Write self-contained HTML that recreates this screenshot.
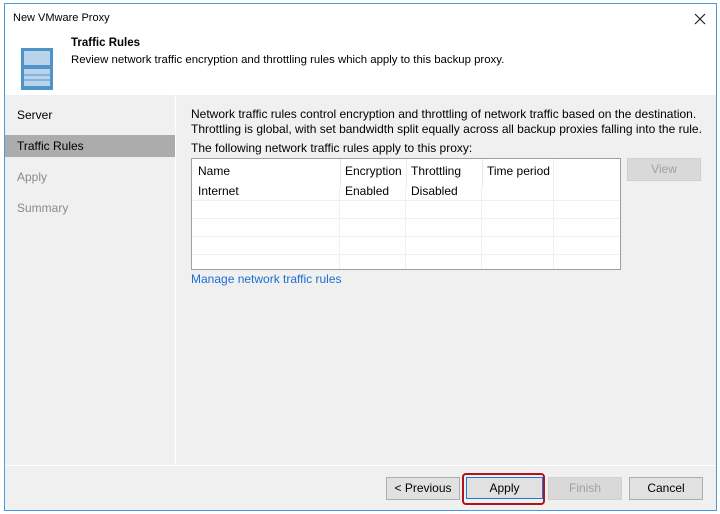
<html><head><style>
body{margin:0;width:720px;height:514px;background:#fff;font-family:"Liberation Sans",sans-serif;font-size:12px;color:#000;position:relative;overflow:hidden}
.a{position:absolute}
.win{left:4px;top:3px;width:711px;height:506px;border:1px solid #4a9ae0;background:#f0f0f0}
.btn{position:absolute;height:21px;border:1px solid #adadad;background:#e1e1e1;text-align:center;line-height:21px;font-size:12px}
.dis{color:#a0a0a0;background:#d9d9d9;border-color:#d0d0d0}
.vl{position:absolute;top:0;bottom:0;width:1px;background:#f0f0f0}
.hl{position:absolute;left:0;right:0;height:1px;background:#f0f0f0}
</style></head><body>
<div class="a win">
 <div class="a" style="left:0;top:0;width:711px;height:91px;background:#fff"></div>
 <div class="a" style="left:8px;top:8px;font-size:11px">New VMware Proxy</div>
 <svg class="a" style="left:689px;top:9px" width="12" height="12"><path d="M1 1L11 11M11 1L1 11" stroke="#222" stroke-width="1.2"/></svg>
 <svg class="a" style="left:16px;top:40px" width="34" height="46"><rect x="0" y="4" width="32" height="42" fill="#4f94c8"/><rect x="3" y="7" width="26" height="14" fill="#b9d4ea"/><rect x="3" y="25" width="26" height="17" fill="#b9d4ea"/><line x1="3" y1="31" x2="29" y2="31" stroke="#4f94c8"/><line x1="3" y1="36" x2="29" y2="36" stroke="#4f94c8"/></svg>
 <div class="a" style="left:66px;top:33px;font-weight:bold;font-size:11.5px">Traffic Rules</div>
 <div class="a" style="left:66px;top:50px;font-size:11.4px">Review network traffic encryption and throttling rules which apply to this backup proxy.</div>
 <div class="a" style="left:170px;top:91px;width:1px;height:371px;background:#fff"></div>
 <div class="a" style="left:0;top:461px;width:711px;height:1px;background:#fff"></div>
 <div class="a" style="left:12px;top:104px">Server</div>
 <div class="a" style="left:0;top:131px;width:170px;height:22px;background:#acacac"></div>
 <div class="a" style="left:12px;top:135px">Traffic Rules</div>
 <div class="a" style="left:12px;top:166px;color:#8a8a8a">Apply</div>
 <div class="a" style="left:12px;top:197px;color:#8a8a8a">Summary</div>
 <div class="a" style="left:186px;top:103px;line-height:14.5px">Network traffic rules control encryption and throttling of network traffic based on the destination.<br>Throttling is global, with set bandwidth split equally across all backup proxies falling into the rule.</div>
 <div class="a" style="left:186px;top:137px">The following network traffic rules apply to this proxy:</div>
 <div class="a" style="left:186px;top:154px;width:428px;height:110px;border:1px solid #a0a0a0;background:#fff">
  <div class="vl" style="left:147px;top:28px"></div><div class="vl" style="left:213px;top:28px"></div><div class="vl" style="left:289px;top:28px"></div><div class="vl" style="left:361px"></div>
  <div class="vl" style="left:148px;top:0;height:28px;background:#e8e8e8"></div><div class="vl" style="left:214px;top:0;height:28px;background:#e8e8e8"></div><div class="vl" style="left:290px;top:0;height:28px;background:#e8e8e8"></div>
  <div class="hl" style="top:41px"></div><div class="hl" style="top:59px"></div><div class="hl" style="top:77px"></div><div class="hl" style="top:95px"></div>
  <div class="a" style="left:6px;top:5px">Name</div><div class="a" style="left:153px;top:5px">Encryption</div><div class="a" style="left:219px;top:5px">Throttling</div><div class="a" style="left:295px;top:5px">Time period</div>
  <div class="a" style="left:6px;top:25px">Internet</div><div class="a" style="left:153px;top:25px">Enabled</div><div class="a" style="left:219px;top:25px">Disabled</div>
 </div>
 <div class="a" style="left:186px;top:268px;color:#1a6fd1">Manage network traffic rules</div>
 <div class="btn dis" style="left:622px;top:154px;width:72px">View</div>
 <div class="btn" style="left:381px;top:473px;width:72px">&lt; Previous</div>
 <div class="a" style="left:457px;top:469px;width:79px;height:28px;border:2px solid #b5121b;border-radius:4px"></div>
 <div class="btn" style="left:461px;top:473px;width:75px;height:20px;line-height:20px;border:1px solid #1979d9">Apply</div>
 <div class="btn dis" style="left:543px;top:473px;width:72px">Finish</div>
 <div class="btn" style="left:624px;top:473px;width:72px">Cancel</div>
</div>
</body></html>
